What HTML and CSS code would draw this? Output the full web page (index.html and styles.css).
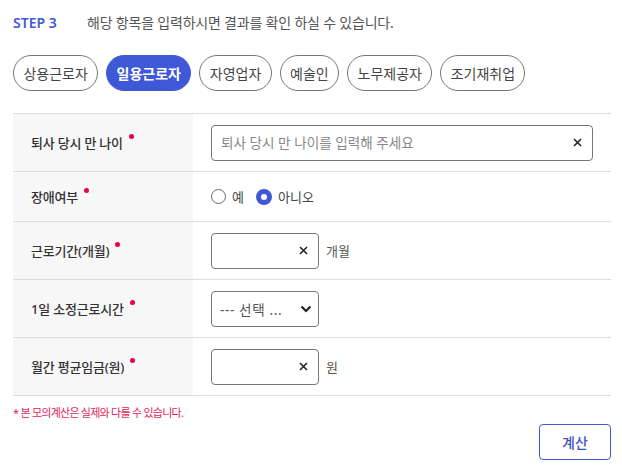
FILE: index.html
```html
<!DOCTYPE html>
<html lang="ko">
<head>
    <meta charset="UTF-8">
    <meta name="viewport" content="width=device-width, initial-scale=1.0">
    <title>퇴직금 모의계산</title>
    <link rel="stylesheet" href="styles.css">
</head>
<body>
    <div class="container">
        <div class="step-head">
            <span class="step-no">STEP 3</span>
            <span class="step-desc">해당 항목을 입력하시면 결과를 확인 하실 수 있습니다.</span>
        </div>

        <div class="tabs">
            <button class="tab">상용근로자</button>
            <button class="tab active">일용근로자</button>
            <button class="tab">자영업자</button>
            <button class="tab">예술인</button>
            <button class="tab">노무제공자</button>
            <button class="tab">조기재취업</button>
        </div>

        <div class="form-table">
            <div class="form-row">
                <div class="form-label">퇴사 당시 만 나이<span class="req"></span></div>
                <div class="form-field">
                    <div class="input-box wide">
                        <input type="text" placeholder="퇴사 당시 만 나이를 입력해 주세요">
                        <span class="clear">
                            <svg width="9" height="9" viewBox="0 0 9 9"><path d="M1 1 L8 8 M8 1 L1 8" stroke="#222" stroke-width="1.6" fill="none"/></svg>
                        </span>
                    </div>
                </div>
            </div>

            <div class="form-row short">
                <div class="form-label">장애여부<span class="req"></span></div>
                <div class="form-field">
                    <label class="radio"><input type="radio" name="disabled"> 예</label>
                    <label class="radio"><input type="radio" name="disabled" checked> 아니오</label>
                </div>
            </div>

            <div class="form-row">
                <div class="form-label">근로기간(개월)<span class="req"></span></div>
                <div class="form-field">
                    <div class="input-box small">
                        <input type="text">
                        <span class="clear">
                            <svg width="9" height="9" viewBox="0 0 9 9"><path d="M1 1 L8 8 M8 1 L1 8" stroke="#222" stroke-width="1.6" fill="none"/></svg>
                        </span>
                    </div>
                    <span class="unit">개월</span>
                </div>
            </div>

            <div class="form-row">
                <div class="form-label">1일 소정근로시간<span class="req"></span></div>
                <div class="form-field">
                    <div class="select-box">
                        <span class="select-text">--- 선택 ...</span>
                        <svg width="12" height="8" viewBox="0 0 12 8"><path d="M1.5 1.5 L6 6 L10.5 1.5" stroke="#222" stroke-width="2.2" fill="none"/></svg>
                    </div>
                </div>
            </div>

            <div class="form-row">
                <div class="form-label">월간 평균임금(원)<span class="req"></span></div>
                <div class="form-field">
                    <div class="input-box small">
                        <input type="text">
                        <span class="clear">
                            <svg width="9" height="9" viewBox="0 0 9 9"><path d="M1 1 L8 8 M8 1 L1 8" stroke="#222" stroke-width="1.6" fill="none"/></svg>
                        </span>
                    </div>
                    <span class="unit">원</span>
                </div>
            </div>
        </div>

        <p class="notice">* 본 모의계산은 실제와 다를 수 있습니다.</p>

        <div class="actions">
            <button class="calc-button">계산</button>
        </div>
    </div>
</body>
</html>
```

FILE: styles.css
```css
* {
    margin: 0;
    padding: 0;
    box-sizing: border-box;
}

body {
    font-family: 'Noto Sans', 'Noto Sans CJK KR', sans-serif;
    color: #333;
    background: #fff;
}

.container {
    padding: 12px 11px 0 13px;
}

.step-head {
    display: flex;
    align-items: center;
    height: 20px;
    font-size: 14px;
}

.step-no {
    color: #4259d4;
    font-weight: 600;
    width: 74px;
}

.step-desc {
    color: #555;
    letter-spacing: -0.2px;
}

.tabs {
    display: flex;
    gap: 8px;
    margin-top: 23px;
}

.tab {
    height: 36px;
    padding: 0 9.4px;
    border: 1px solid #777;
    border-radius: 18px;
    background: #fff;
    color: #444;
    font-family: inherit;
    font-size: 14px;
}

.tab.active {
    background: #3f59d6;
    border-color: #3f59d6;
    color: #fff;
    font-weight: 700;
}

.form-table {
    margin-top: 22px;
    border-top: 1px solid #ddd;
}

.form-row {
    display: grid;
    grid-template-columns: 180px 1fr;
    border-bottom: 1px solid #ddd;
    min-height: 58px;
}

.form-row.short {
    min-height: 50px;
}

.form-label {
    display: flex;
    align-items: center;
    background: #f7f7f7;
    padding-left: 18px;
    font-size: 13px;
    font-weight: 500;
    color: #333;
    letter-spacing: -0.2px;
}

.req {
    width: 5px;
    height: 5px;
    border-radius: 50%;
    background: #e4004f;
    margin-left: 6px;
    transform: translateY(-6px);
}

.form-field {
    display: flex;
    align-items: center;
    padding: 0 18px;
    font-size: 13px;
    color: #444;
}

.input-box {
    display: flex;
    align-items: center;
    height: 36px;
    border: 1px solid #777;
    border-radius: 4px;
    padding: 0 10px 0 9px;
}

.input-box.wide {
    flex: 1;
}

.input-box.small {
    width: 108px;
}

.input-box input {
    flex: 1;
    min-width: 0;
    border: none;
    outline: none;
    font-family: inherit;
    font-size: 13.6px;
    color: #333;
}

.input-box input::placeholder {
    color: #888;
}

.clear {
    display: flex;
    margin-left: 6px;
}

.unit {
    margin-left: 7px;
    color: #555;
}

.select-box {
    display: flex;
    align-items: center;
    justify-content: space-between;
    width: 108px;
    height: 36px;
    border: 1px solid #777;
    border-radius: 4px;
    padding: 0 6px 0 8px;
    color: #555;
}

.select-text {
    font-size: 13.6px;
    letter-spacing: 0.6px;
}

.radio {
    display: flex;
    align-items: center;
    gap: 6px;
    margin-right: 12px;
    color: #444;
}

.radio input {
    appearance: none;
    width: 15px;
    height: 15px;
    border: 1px solid #666;
    border-radius: 50%;
    margin: 0;
}

.radio input:checked {
    width: 16px;
    height: 16px;
    border: 5px solid #3f59d6;
}

.notice {
    margin-top: 9px;
    font-size: 11px;
    line-height: 16px;
    color: #e2245a;
    letter-spacing: -0.75px;
}

.actions {
    display: flex;
    justify-content: flex-end;
    margin-top: 3px;
}

.calc-button {
    width: 72px;
    height: 36px;
    border: 1px solid #3f59d6;
    border-radius: 4px;
    background: #fff;
    color: #3f50c4;
    font-family: inherit;
    font-size: 14px;
    font-weight: 500;
}
```
